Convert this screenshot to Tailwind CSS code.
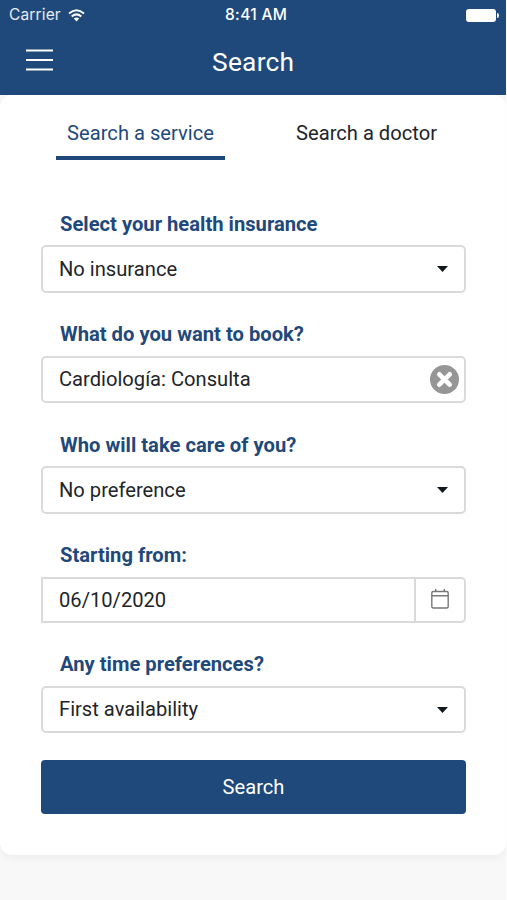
<!DOCTYPE html>
<html lang="en"><head><meta charset="utf-8"><title>Search</title>
<script src="https://cdn.jsdelivr.net/npm/@tailwindcss/browser@4"></script></head>
<body class="bg-[#fcfcfc] font-['Roboto',sans-serif] text-[#212529]">
<div class="w-[506.4px] h-[900px] overflow-hidden bg-[#f8f8f8]">
<header class="h-[95px] bg-[#1f497b] text-white">
<div class="grid h-[30px] grid-cols-3 items-center pl-[9px] pr-[7px] font-['Inter',sans-serif]">
<div class="flex items-center gap-[7px]"><span class="text-[15.5px] tracking-[.15px] text-white/90">Carrier</span>
<svg class="h-[13px] w-[17px]" viewBox="0 0 17 13" fill="none" stroke="white" stroke-width="2"><path d="M1 4.500Q8.500-2 16 4.500M3.700 7.500Q8.500 3.200 13.300 7.500"/><path d="M5.800 9.500Q8.500 7.300 11.200 9.500L8.500 12.500Z" fill="white" stroke="none"/></svg></div>
<div class="pl-[4px] text-center font-medium text-[15.5px] tracking-[.35px] whitespace-nowrap">8:41 AM</div>
<div class="flex items-center justify-end"><div class="h-[13px] w-[30px] rounded-[3px] border border-white/60 bg-white"></div><div class="ml-px h-[5px] w-[2px] rounded-r bg-white"></div></div>
</div>
<div class="grid h-[65px] grid-cols-3 items-center px-[26px]">
<svg class="h-[22px] w-[27px] -mt-[6px]" viewBox="0 0 27 22" stroke="white" stroke-width="2"><path d="M0 1.500H27M0 11H27M0 20.500H27"/></svg>
<h1 class="text-center text-[26.3px] tracking-[.25px]">Search</h1>
</div>
</header>
<main class="h-[760px] rounded-[12px] bg-white shadow-[0_2px_10px_rgba(0,0,0,0.06)]">
<nav class="flex pl-[56px] pt-[18px] text-[20.15px] leading-[41px]">
<div class="h-[47px] w-[169px] border-b-4 border-[#1f497b] text-center text-[#1f497b]">Search a service</div>
<div class="ml-[57px] w-[169px] text-center">Search a doctor</div>
</nav>
<form class="mx-[41px] w-[425px] pt-[50px] text-[20.15px] leading-[28px]">
<label class="block h-[35.4px] pl-[19px] text-[20.2px] font-bold text-[#1f497b]">Select your health insurance</label>
<div class="flex h-[47.5px] items-center justify-between rounded-[5px] border-2 border-[#dadada] pl-4 pr-4 pb-px"><span>No insurance</span><svg class="mt-px h-[6px] w-[11px]" viewBox="0 0 11 6"><path fill="#111820" d="M0 0H11L5.500 6Z"/></svg></div>
<label class="mt-[27.6px] block h-[35.4px] pl-[19px] text-[20.2px] font-bold text-[#1f497b]">What do you want to book?</label>
<div class="flex h-[47.5px] items-center justify-between rounded-[5px] border-2 border-[#dadada] pl-4 pr-[5px] pb-px"><span>Cardiología: Consulta</span><svg class="h-[29px] w-[29px]" viewBox="0 0 29 29"><circle cx="14.500" cy="14.500" r="14.500" fill="#969696"/><path d="M9.300 9.300L19.700 19.700M19.700 9.300L9.300 19.700" stroke="white" stroke-width="4.600" stroke-linecap="round"/></svg></div>
<label class="mt-[27.6px] block h-[35.4px] pl-[19px] text-[20.2px] font-bold text-[#1f497b]">Who will take care of you?</label>
<div class="flex h-[47.5px] items-center justify-between rounded-[5px] border-2 border-[#dadada] pl-4 pr-4 pb-px"><span>No preference</span><svg class="mt-px h-[6px] w-[11px]" viewBox="0 0 11 6"><path fill="#111820" d="M0 0H11L5.500 6Z"/></svg></div>
<label class="mt-[27.6px] block h-[35.4px] pl-[19px] text-[20.2px] font-bold text-[#1f497b]">Starting from:</label>
<div class="flex h-[46px] items-stretch rounded-r-[5px] border-2 border-[#dadada]"><span class="flex flex-1 items-center pl-4">06/10/2020</span><span class="flex w-[50px] items-center justify-center border-l-2 border-[#dadada]"><svg class="-mt-[2px] h-[20px] w-[18px]" viewBox="0 0 18 20" fill="none" stroke="#777" stroke-width="1.400"><rect x=".8" y="2.500" width="16.400" height="16.500" rx="1.500"/><path d="M1 6.800H17M4.700 0V2.500M13.300 0V2.500"/></svg></span></div>
<label class="mt-[27.600px] block h-[35.4px] pl-[19px] text-[20.2px] font-bold text-[#1f497b]">Any time preferences?</label>
<div class="flex h-[47.5px] items-center justify-between rounded-[5px] border-2 border-[#dadada] pl-4 pr-4 pb-px"><span>First availability</span><svg class="mt-px h-[6px] w-[11px]" viewBox="0 0 11 6"><path fill="#111820" d="M0 0H11L5.500 6Z"/></svg></div>
<button type="button" class="mt-[26.6px] h-[54px] w-full rounded-[4px] bg-[#1f497b] text-[20.15px] text-white">Search</button>
</form></main></div></body></html>
